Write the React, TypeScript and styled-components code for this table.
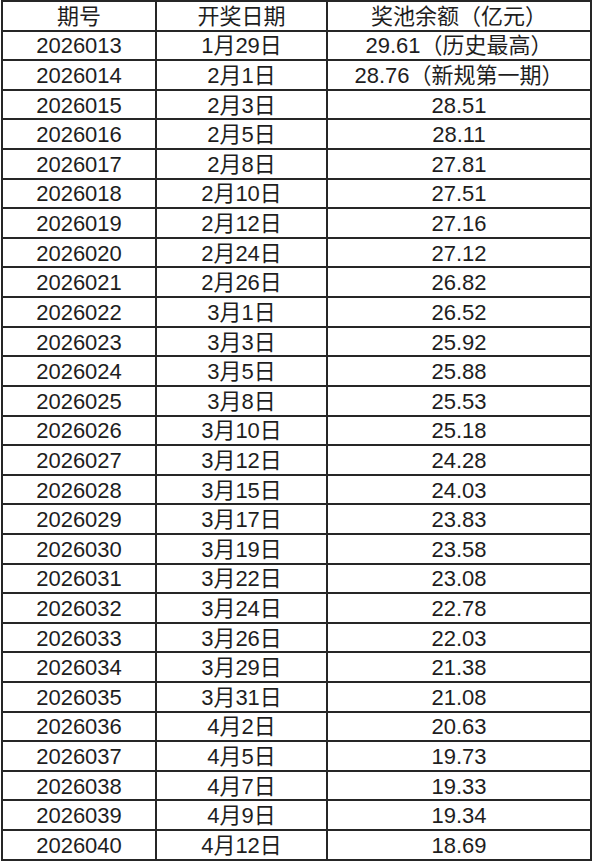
import React from 'react';
import styled, { createGlobalStyle } from 'styled-components';

const GlobalStyle = createGlobalStyle`
  html, body {
    margin: 0;
    padding: 0;
    background: #ffffff;
  }
`;

const rows: [string, string, string][] = [
  ['2026013', '1月29日', '29.61（历史最高）'],
  ['2026014', '2月1日', '28.76（新规第一期）'],
  ['2026015', '2月3日', '28.51'],
  ['2026016', '2月5日', '28.11'],
  ['2026017', '2月8日', '27.81'],
  ['2026018', '2月10日', '27.51'],
  ['2026019', '2月12日', '27.16'],
  ['2026020', '2月24日', '27.12'],
  ['2026021', '2月26日', '26.82'],
  ['2026022', '3月1日', '26.52'],
  ['2026023', '3月3日', '25.92'],
  ['2026024', '3月5日', '25.88'],
  ['2026025', '3月8日', '25.53'],
  ['2026026', '3月10日', '25.18'],
  ['2026027', '3月12日', '24.28'],
  ['2026028', '3月15日', '24.03'],
  ['2026029', '3月17日', '23.83'],
  ['2026030', '3月19日', '23.58'],
  ['2026031', '3月22日', '23.08'],
  ['2026032', '3月24日', '22.78'],
  ['2026033', '3月26日', '22.03'],
  ['2026034', '3月29日', '21.38'],
  ['2026035', '3月31日', '21.08'],
  ['2026036', '4月2日', '20.63'],
  ['2026037', '4月5日', '19.73'],
  ['2026038', '4月7日', '19.33'],
  ['2026039', '4月9日', '19.34'],
  ['2026040', '4月12日', '18.69'],
];

const Sheet = styled.div`
  display: grid;
  grid-template-columns: 154px 171px 264px;
  grid-auto-rows: 29.62px;
  width: max-content;
  margin-left: 1px;
  border-top: 2px solid #262626;
  border-left: 2px solid #262626;
  font-family: 'Liberation Sans', 'Noto Sans CJK SC', sans-serif;
  font-size: 22px;
  color: #1e1e1e;
`;

const Cell = styled.div`
  display: flex;
  align-items: center;
  justify-content: center;
  box-sizing: border-box;
  padding-top: 2px;
  border-right: 2px solid #262626;
  border-bottom: 2px solid #262626;
  white-space: nowrap;
  line-height: 1;
`;

const App: React.FC = () => {
  return (
    <>
      <GlobalStyle />
      <Sheet>
        <Cell>期号</Cell>
        <Cell>开奖日期</Cell>
        <Cell>奖池余额（亿元）</Cell>
        {rows.map((r) => (
          <React.Fragment key={r[0]}>
            <Cell>{r[0]}</Cell>
            <Cell>{r[1]}</Cell>
            <Cell>{r[2]}</Cell>
          </React.Fragment>
        ))}
      </Sheet>
    </>
  );
};

export default App;
